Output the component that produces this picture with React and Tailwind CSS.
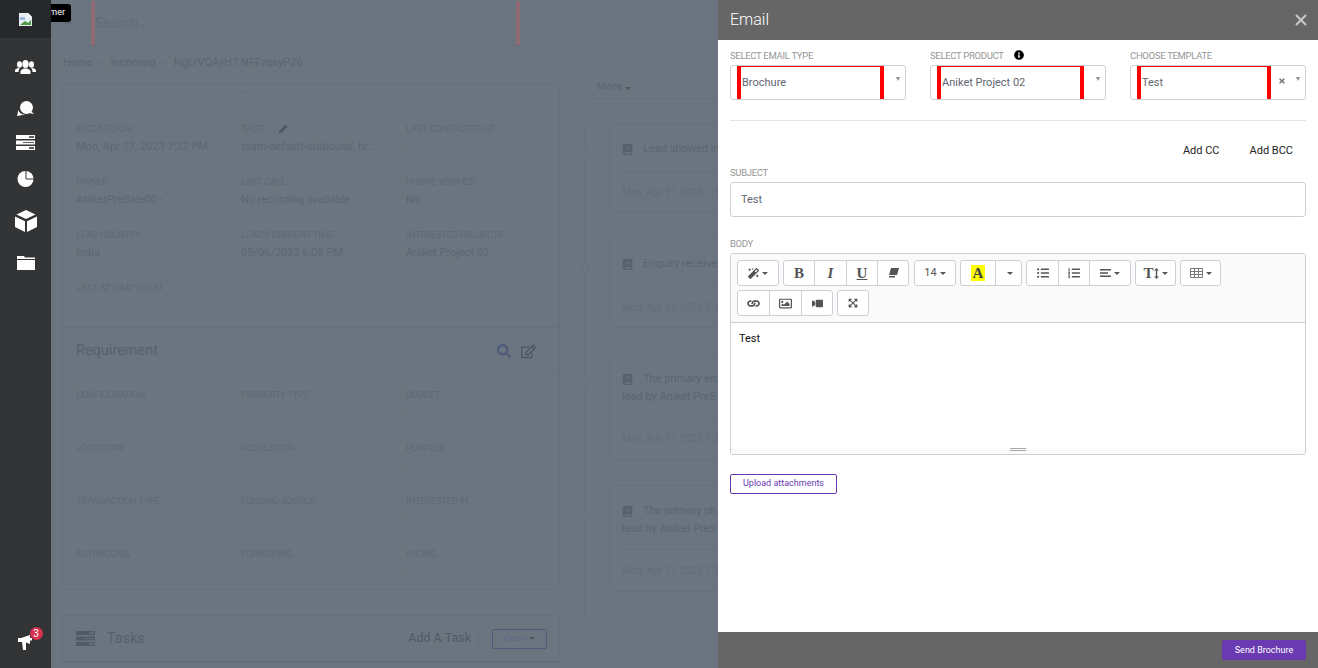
import React from "react";
import {
  FaSearch,
  FaRegEdit,
  FaPencilAlt,
  FaBook,
  FaInfoCircle,
  FaTimes,
  FaMagic,
  FaListUl,
  FaListOl,
  FaLink,
  FaRegImage,
  FaVideo,
  FaExpandArrowsAlt,
} from "react-icons/fa";

const leadRows = [
  [
    ["RECEIVED ON", "Mon, Apr 17, 2023 7:37 PM"],
    ["TAGS", "team-default-outbound, br..."],
    ["LAST CONTACTED AT", "-"],
  ],
  [
    ["OWNER", "AniketPreSale00 -"],
    ["LAST CALL", "No recording available"],
    ["PHONE VERIFIED", "No"],
  ],
  [
    ["LEAD COUNTRY", "India"],
    ["LEAD'S CURRENT TIME", "05/06/2023 6:08 PM"],
    ["INTERESTED PROJECTS", "Aniket Project 02"],
  ],
  [["LAST ATTEMPTED AT", "-"]],
];

const requirementRows = [
  [
    ["CONFIGURATION", "-"],
    ["PROPERTY TYPE", "-"],
    ["BUDGET", "-"],
  ],
  [
    ["LOCATIONS", "-"],
    ["POSSESSION", "-"],
    ["PURPOSE", "-"],
  ],
  [
    ["TRANSACTION TYPE", "-"],
    ["FUNDING SOURCE", "-"],
    ["INTERESTED IN", "-"],
  ],
  [
    ["BATHROOMS", "-"],
    ["FURNISHING", "-"],
    ["FACING", "-"],
  ],
];

const activity = [
  { title: ["Lead showed in"], h: "h-[90px]", head: "h-[48px]" },
  { title: ["Enquiry receive"], h: "h-[90px]", head: "h-[48px]" },
  { title: ["The primary em", "lead by Aniket PreS"], h: "h-[107px]", head: "h-[64px]" },
  { title: ["The primary ph", "lead by Aniket PreS"], h: "h-[107px]", head: "h-[64px]" },
];

const Caret = () => (
  <span className="ml-[3px] inline-block border-x-[3px] border-t-[3px] border-x-transparent border-t-[#555]" />
);

const ServerIcon = ({ fill, notch, className }) => (
  <svg className={className} width="19" height="15" viewBox="0 0 19 15">
    <path d="M0 0h19v4H0zM0 5.500h19v4H0zM0 11h19v4H0z" fill={fill} />
    <path d="M13 1h5v2h-5zM7 7h11v1H7zM13 12h5v2h-5z" fill={notch} />
  </svg>
);

const InfoRows = ({ rows }) =>
  rows.map((row, i) => (
    <div key={i} className="grid h-[53px] grid-cols-[165px_165px_165px]">
      {row.map(([label, value]) => (
        <div key={label}>
          <div className="flex h-[16px] items-center gap-[16px] text-[9.500px] tracking-[-0.3px] text-[#5f6a75]">
            {label}
            {label === "TAGS" && <FaPencilAlt className="text-[8px] text-[#454f5a]" />}
          </div>
          <div className="mt-[1px] h-[18px] whitespace-nowrap text-[11px] leading-[18px] text-[#5c6773]">{value}</div>
        </div>
      ))}
    </div>
  ));

const Select = ({ label, value, info, clear }) => (
  <div className="w-[176px]">
    <div className="flex h-[15px] items-center gap-[10px] pt-[2px] text-[9.500px] tracking-[-0.3px] text-[#969696]">
      {label}
      {info && <FaInfoCircle className="-mt-[3px] text-[10px] text-black" />}
    </div>
    <div className="mt-[2px] flex h-[35px] items-stretch rounded-[3px] border border-[#ccd0d6] pl-[6px] pr-[5px]">
      <div
        className={`flex h-full shrink-0 items-center border-x-[4px] border-t border-x-[#ff0000] border-t-[#ff0000] pl-[1px] pt-[1px] text-[11px] text-[#5f6670] ${
          clear ? "w-[134px]" : "w-[147px]"
        }`}
      >
        {value}
      </div>
      <div className="flex flex-1 justify-end gap-[10px] pt-[10px]">
        {clear && <FaTimes className="mt-[1px] text-[8px] text-[#777]" />}
        <span className="mt-[1px] h-0 border-x-[2.500px] border-t-[4px] border-x-transparent border-t-[#8a8a8a]" />
      </div>
    </div>
  </div>
);

const ToolBtn = ({ w, children }) => (
  <div className={`flex h-full items-center justify-center border-r border-[#ccd0d6] text-[#555] last:border-r-0 ${w}`}>
    {children}
  </div>
);

const ToolGroup = ({ children, className = "" }) => (
  <div className={`flex h-[26px] overflow-hidden rounded-[3px] border border-[#ccd0d6] bg-white ${className}`}>{children}</div>
);

const App = () => {
  return (
    <div className="relative flex h-[668px] w-[1318px] overflow-hidden bg-[#6a7580] font-['Roboto',sans-serif]">
      {/* tooltip peeking out from behind the rail */}
      <div className="absolute left-[40px] top-[4px] z-10 flex h-[18px] w-[31px] items-center justify-end rounded-[3px] bg-black pr-[6px] text-[9px] text-white">
        mer
      </div>

      <aside className="z-20 flex h-full w-[51px] shrink-0 flex-col items-center bg-[#323436] text-white">
        <div className="flex h-[38px] w-full items-center justify-center bg-[#262829]">
          <svg width="13" height="13" viewBox="0 0 13 13">
            <path d="M0 0h9l4 4v9H0z" fill="#e8eef5" />
            <path d="M9 0l4 4H9z" fill="#fff" />
            <path d="M1 4h5v3H1z" fill="#9dbbe6" />
            <path d="M1 12l5-4 3 2 3-3v5z" fill="#4c9a3f" />
          </svg>
        </div>
        <svg className="mt-[22px]" width="21" height="14" viewBox="0 0 21 14" fill="#fff">
          <ellipse cx="10.500" cy="4" rx="3.200" ry="4" />
          <path d="M5.500 14v-2.500c0-1.500 2-2.500 3.500-3h3c1.500.5 3.500 1.500 3.500 3V14z" />
          <ellipse cx="4.500" cy="4.500" rx="2.500" ry="3.200" />
          <path d="M0 12v-1.500C0 9.300 1.500 8.500 3 8c.5.300 1 .5 2 .5-.8.600-1.500 1.500-1.500 3.500z" />
          <ellipse cx="16.500" cy="4.500" rx="2.500" ry="3.200" />
          <path d="M21 12v-1.500C21 9.300 19.500 8.500 18 8c-.5.300-1 .5-2 .5.800.600 1.500 1.500 1.500 3.500z" />
        </svg>
        <svg className="mt-[27px]" width="17" height="16" viewBox="0 0 17 16" fill="#fff">
          <circle cx="9.500" cy="6.500" r="6.500" />
          <path d="M14 10l3 3-5-1zM1 9c0 2.500-.5 4.500-1 6 2.500 0 4-.5 5-1.200 1 .300 2 .300 3 0C4.500 13.300 2 11.500 1 9z" />
        </svg>
        <ServerIcon className="mt-[18px]" fill="#fff" notch="#5b5d5f" />
        <svg className="mt-[21px]" width="17" height="16" viewBox="0 0 17 16">
          <circle cx="8.500" cy="8" r="8" fill="#fff" />
          <path d="M9 8V0M9 8h8" stroke="#323436" strokeWidth="1" fill="none" />
        </svg>
        <svg className="mt-[23px]" width="22" height="22" viewBox="0 0 22 22" fill="#fff">
          <path d="M11 0l9.500 4.500L11 9 1.500 4.500z" />
          <path d="M0 6.500l10 4.800V22L0 17zM22 6.500l-10 4.800V22l10-5z" />
        </svg>
        <svg className="mt-[23px]" width="18" height="15" viewBox="0 0 18 15" fill="#fff">
          <path d="M0 1h7l1 1.500h10V4H0z" />
          <path d="M0 5h18v10H0z" />
        </svg>
        <div className="relative mb-[18px] mt-auto">
          <svg width="16" height="17" viewBox="0 0 16 17" fill="#fff">
            <path d="M0 5h3L12 2v9L8 9.500V17H5L4 9H0z" />
            <path d="M12 5h2v2.500h-2z" />
          </svg>
          <span className="absolute -right-[9px] -top-[6px] flex h-[13px] w-[13px] items-center justify-center rounded-full bg-[#d6324f] text-[10px] text-white">
            3
          </span>
        </div>
      </aside>

      <main className="flex h-full w-[667px] shrink-0 flex-col overflow-hidden">
        <header className="flex h-[46px] shrink-0 items-start border-b border-[#66717c]">
          <FaSearch className="ml-[12px] mt-[15px] text-[11px] text-[#626d79]" />
          <div className="ml-[17px] mt-[1px] flex h-[44px] w-[429px] items-center justify-between text-[14px] text-[#616c78]">
            <span className="flex h-full items-center gap-0">
              <span className="h-full w-[4px] bg-[#926a74]" />
              Search...
            </span>
            <span className="h-full w-[4px] bg-[#926a74]" />
          </div>
        </header>
        <nav className="flex h-[37px] shrink-0 items-start gap-[6px] pl-[12px] pt-[9px] text-[11px] text-[#5a6571]">
          <span>Home</span>
          <span className="text-[#636e7a]">&gt;</span>
          <span>Incoming</span>
          <span className="text-[#636e7a]">&gt;</span>
          <span>NgLrVQAyH7 NFFzqsyP26</span>
        </nav>

        <div className="flex min-h-0 flex-1 pl-[11px]">
          <div className="w-[498px] shrink-0">
            <section className="h-[507px] rounded-b-[3px] border border-[#65707b] px-[13px]">
              <div className="grid h-[37px] grid-cols-[165px_165px]">
                <div className="col-start-2 h-[14px] text-[11px] text-[#5a6571]">-</div>
              </div>
              <InfoRows rows={leadRows} />
              <div className="-mx-[13px] mt-[-6px] flex h-[47px] items-center justify-between border-t border-[#65707b] px-[13px]">
                <span className="text-[14.500px] text-[#56616d]">Requirement</span>
                <div className="flex items-center gap-[10px] pr-[10px]">
                  <FaSearch className="text-[14px] text-[#4f5b7c]" />
                  <FaRegEdit className="text-[15px] text-[#4b5662]" />
                </div>
              </div>
              <div className="-mx-[13px] border-t border-[#65707b] px-[13px] pt-[12px]">
                <InfoRows rows={requirementRows} />
              </div>
            </section>
            <section className="mt-[25px] rounded-t-[3px] border border-[#65707b]">
              <div className="flex h-[46px] items-center border-b border-[#65707b] pl-[13px] pr-[12px]">
                <ServerIcon fill="#4f5a66" notch="#636e7a" />
                <span className="ml-[12px] text-[14.500px] text-[#56616d]">Tasks</span>
                <span className="ml-auto text-[12.500px] text-[#4f5a66]">Add A Task</span>
                <span className="ml-[7px] h-[20px] border-l border-[#65707b]" />
                <span className="ml-[13px] flex h-[20px] w-[55px] items-center justify-center rounded-[2px] border border-[#4f5b7c] text-[9.500px] text-[#5c6a85]">
                  Open
                  <Caret />
                </span>
              </div>
            </section>
          </div>

          <div className="ml-[25px] min-w-0 flex-1">
            <div className="h-[16px] overflow-hidden border-b border-[#65707b] pl-[12px] text-[11px] leading-[14px] text-[#5a6571]">
              <div className="-mt-[3px]">
                More
                <Caret />
              </div>
            </div>
            <div className="relative mt-[24px] flex h-[494px] flex-col gap-[25px] pl-[24px]">
              <div className="absolute bottom-0 left-[-1px] top-0 w-px bg-[#65707b]" />
              {activity.map((item) => (
                <div key={item.title[0]} className={`relative w-[300px] shrink-0 rounded-[3px] border border-[#65707b] ${item.h}`}>
                  <span className="absolute left-[-30px] top-[24px] h-[9px] w-[9px] rounded-full border border-[#65707b] bg-[#6a7580]" />
                  <div className={`mx-[12px] border-b border-[#65707b] pt-[16px] text-[11px] leading-[18px] text-[#5a6571] ${item.head}`}>
                    {item.title.map((line, i) => (
                      <div key={line} className="whitespace-nowrap">
                        {i === 0 && <FaBook className="mr-[10px] inline text-[11px] text-[#56616d]" />}
                        {line}
                      </div>
                    ))}
                  </div>
                  <div className="mx-[12px] whitespace-nowrap pt-[13px] text-[10px] text-[#626d79]">Mon, Apr 17, 2023 7:37 PM</div>
                </div>
              ))}
            </div>
          </div>
        </div>
      </main>

      <section className="z-30 flex h-full w-[600px] shrink-0 flex-col bg-white">
        <div className="flex h-[40px] shrink-0 items-center justify-between bg-[#666] pl-[12px] pr-[11px] text-white">
          <span className="text-[16px] font-light">Email</span>
          <svg width="12" height="12" viewBox="0 0 12 12" stroke="#c9c9c9" strokeWidth="2" fill="none">
            <path d="M1 1l10 10M11 1L1 11" />
          </svg>
        </div>

        <div className="min-h-0 flex-1 px-[12px] pt-[8px]">
          <div className="flex gap-[24px]">
            <Select label="SELECT EMAIL TYPE" value="Brochure" />
            <Select label="SELECT PRODUCT" value="Aniket Project 02" info />
            <Select label="CHOOSE TEMPLATE" value="Test" clear />
          </div>
          <div className="mt-[20px] border-t border-[#e2e4e7]" />
          <div className="flex h-[47px] items-center justify-end gap-[30px] pr-[13px] pt-[13px] text-[11px] text-[#222]">
            <span>Add CC</span>
            <span>Add BCC</span>
          </div>
          <div className="h-[9px] text-[9.500px] leading-[9px] tracking-[-0.3px] text-[#969696]">SUBJECT</div>
          <div className="mt-[5px] flex h-[35px] items-center rounded-[3px] border border-[#ccd0d6] pl-[10px] pt-[1px] text-[11px] text-[#5f6670]">
            Test
          </div>
          <div className="mt-[22px] h-[10px] text-[9.500px] leading-[10px] tracking-[-0.3px] text-[#969696]">BODY</div>
          <div className="mt-[4px] h-[202px] overflow-hidden rounded-[3px] border border-[#ccd0d6]">
            <div className="h-[69px] border-b border-[#ccd0d6] bg-[#fafafa] pl-[6px] pt-[6px]">
              <div className="flex gap-[4px]">
                <ToolGroup>
                  <ToolBtn w="w-[40px]"><FaMagic className="text-[11px]" /><Caret /></ToolBtn>
                </ToolGroup>
                <ToolGroup>
                  <ToolBtn w="w-[31px]"><span className="font-['Liberation_Serif',serif] text-[15px] font-bold">B</span></ToolBtn>
                  <ToolBtn w="w-[32px]"><span className="font-['Liberation_Serif',serif] text-[15px] font-bold italic">I</span></ToolBtn>
                  <ToolBtn w="w-[31px]"><span className="font-['Liberation_Serif',serif] text-[15px] font-bold underline">U</span></ToolBtn>
                  <ToolBtn w="w-[30px]">
                    <svg width="11" height="10" viewBox="0 0 11 10" fill="#555">
                      <path d="M3 0h8l-2 7H1z" />
                      <path d="M1 8h6v1.500H1z" />
                    </svg>
                  </ToolBtn>
                </ToolGroup>
                <ToolGroup className="ml-[1px]">
                  <ToolBtn w="w-[40px]"><span className="text-[11px]">14</span><Caret /></ToolBtn>
                </ToolGroup>
                <ToolGroup>
                  <ToolBtn w="w-[35px]">
                    <span className="flex h-[16px] w-[14px] items-center justify-center bg-[#ffff00] font-['Liberation_Serif',serif] text-[15px] font-bold text-[#444]">
                      A
                    </span>
                  </ToolBtn>
                  <ToolBtn w="w-[25px]"><Caret /></ToolBtn>
                </ToolGroup>
                <ToolGroup>
                  <ToolBtn w="w-[32px]"><FaListUl className="text-[12px]" /></ToolBtn>
                  <ToolBtn w="w-[31px]"><FaListOl className="text-[12px]" /></ToolBtn>
                  <ToolBtn w="w-[40px]">
                    <svg width="11" height="8" viewBox="0 0 11 8" fill="#555">
                      <path d="M0 0h11v1.500H0zM0 3.200h8v1.500H0zM0 6.500h11V8H0z" />
                    </svg>
                    <Caret />
                  </ToolBtn>
                </ToolGroup>
                <ToolGroup>
                  <ToolBtn w="w-[39px]">
                    <span className="font-['Liberation_Serif',serif] text-[15px] font-bold leading-none">T</span>
                    <svg width="5" height="11" viewBox="0 0 5 11" fill="#555">
                      <path d="M2.500 0L5 2.500H3.200v6H5L2.500 11 0 8.500h1.800v-6H0z" />
                    </svg>
                    <Caret />
                  </ToolBtn>
                </ToolGroup>
                <ToolGroup>
                  <ToolBtn w="w-[39px]">
                    <svg width="13" height="10" viewBox="0 0 13 10" fill="none" stroke="#777" strokeWidth="1">
                      <path d="M.5.500h12v9H.5zM.5 3.500h12M.5 6.500h12M4.500.500v9M8.500.500v9" />
                    </svg>
                    <Caret />
                  </ToolBtn>
                </ToolGroup>
              </div>
              <div className="mt-[4px] flex gap-[4px]">
                <ToolGroup>
                  <ToolBtn w="w-[32px]"><FaLink className="rotate-45 text-[11px]" /></ToolBtn>
                  <ToolBtn w="w-[32px]"><FaRegImage className="text-[13px]" /></ToolBtn>
                  <ToolBtn w="w-[30px]"><FaVideo className="-scale-x-100 text-[11px]" /></ToolBtn>
                </ToolGroup>
                <ToolGroup>
                  <ToolBtn w="w-[30px]"><FaExpandArrowsAlt className="text-[10px]" /></ToolBtn>
                </ToolGroup>
              </div>
            </div>
            <div className="h-[125px] pl-[8px] pt-[8px] text-[11px] text-[#111]">Test</div>
            <div className="flex h-[6px] flex-col items-center gap-[1px] bg-[#fafafa]">
              <span className="h-px w-[16px] bg-[#a9a9a9]" />
              <span className="h-px w-[16px] bg-[#a9a9a9]" />
            </div>
          </div>
          <button className="mt-[19px] flex h-[20px] w-[107px] items-center justify-center rounded-[2px] border border-[#6a3ab2] text-[9px] text-[#6a3ab2]">
            Upload attachments
          </button>
        </div>

        <div className="flex h-[36px] shrink-0 items-center justify-end bg-[#666] pr-[12px]">
          <button className="flex h-[20px] w-[84px] items-center justify-center rounded-[2px] bg-[#6a3ab2] pt-[1px] text-[9px] text-white">
            Send Brochure
          </button>
        </div>
      </section>
    </div>
  );
};

export default App;
